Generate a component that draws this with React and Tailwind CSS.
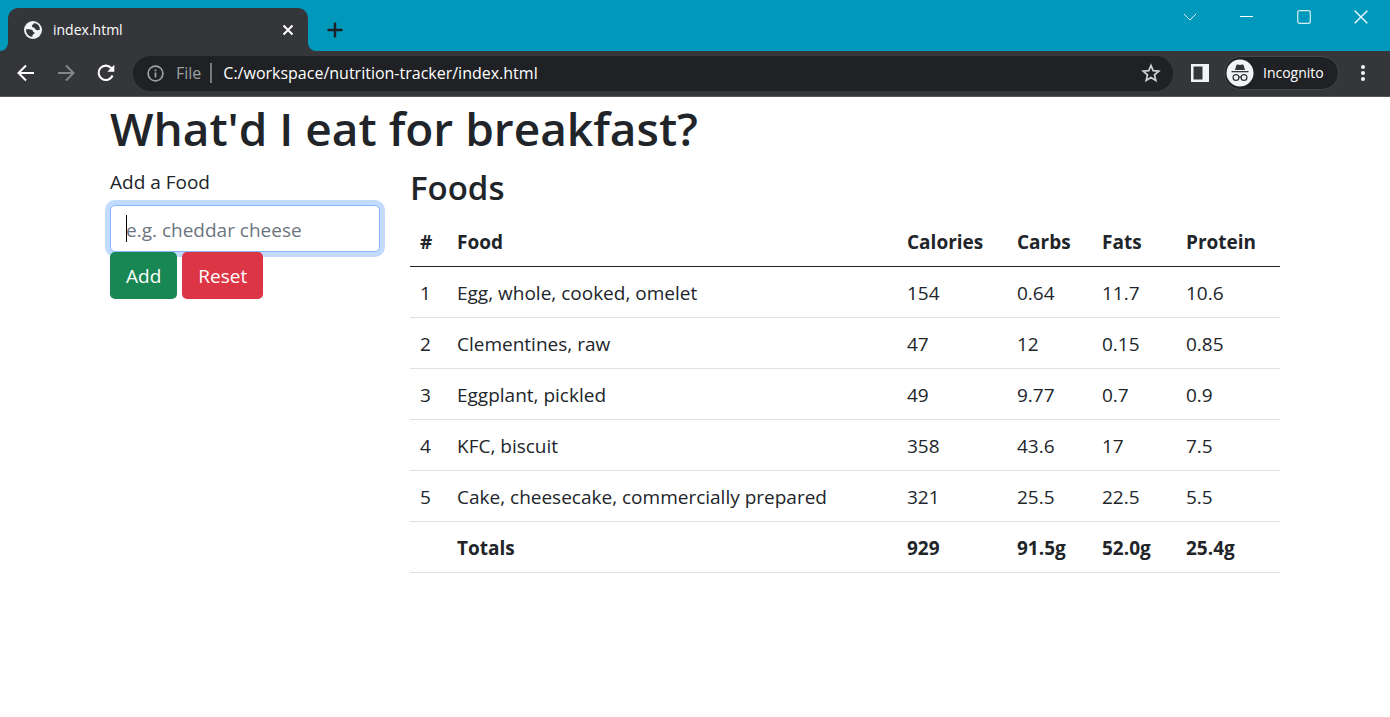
import React from "react";

const foods = [
  { name: "Egg, whole, cooked, omelet", calories: "154", carbs: "0.64", fats: "11.7", protein: "10.6" },
  { name: "Clementines, raw", calories: "47", carbs: "12", fats: "0.15", protein: "0.85" },
  { name: "Eggplant, pickled", calories: "49", carbs: "9.77", fats: "0.7", protein: "0.9" },
  { name: "KFC, biscuit", calories: "358", carbs: "43.6", fats: "17", protein: "7.5" },
  { name: "Cake, cheesecake, commercially prepared", calories: "321", carbs: "25.5", fats: "22.5", protein: "5.5" },
];

function GlobeIcon() {
  return (
    <svg width="20" height="20" viewBox="0 0 20 20" aria-hidden="true">
      <circle cx="10" cy="10" r="9" fill="#f1f3f4" />
      <path d="M3 9.300c2.200-.2 4.900-.3 6.400 1 .9.800.3 1.700 1.500 2 .9.200.9 1.200.1 1.500-1.100.4-1.600 1.200-1.700 3.100A7 7 0 0 1 3 9.300z" fill="#35363a" />
      <path d="M11.300 3.100A7 7 0 0 1 17 9.500c-1.400.9-3.100.8-4.400.1-1-.6-.5-1.700-1.600-2.100-1-.3-2.100-.3-2.100-1.600 0-1.400 1.800-1.200 2.400-2.800z" fill="#35363a" />
    </svg>
  );
}

function IncognitoIcon() {
  return (
    <svg width="28" height="28" viewBox="0 0 28 28" aria-hidden="true">
      <circle cx="14" cy="14" r="13.500" fill="#f1f3f4" />
      <path d="M10.300 6.300c.2-.7.800-1 1.500-.8l2.200.6 2.200-.6c.7-.2 1.300.1 1.500.8l1.300 4.700H9z" fill="#35363a" />
      <path d="M5.500 12h17v1.300h-17z" fill="#35363a" />
      <g fill="none" stroke="#35363a" strokeWidth="1.300">
        <circle cx="10" cy="18.500" r="2.900" />
        <circle cx="18" cy="18.500" r="2.900" />
        <path d="M12.900 18.200c.7-.5 1.500-.5 2.200 0" />
      </g>
    </svg>
  );
}

function TabStrip() {
  return (
    <div className="flex h-[51px] items-end bg-[#0099bc]">
      <svg width="8" height="8" viewBox="0 0 8 8" aria-hidden="true">
        <path d="M0 8h8V0a8 8 0 0 1-8 8z" fill="#35363a" />
      </svg>
      <div className="flex h-[43px] w-[300px] items-center rounded-t-[10px] bg-[#35363a] pl-[15px] pr-3 text-white">
        <GlobeIcon />
        <span className="ml-[10px] flex-1 text-sm">index.html</span>
        <button type="button" aria-label="Close tab" className="flex size-4 items-center justify-center">
          <svg width="12" height="12" viewBox="0 0 12 12" stroke="#fff" strokeWidth="2" aria-hidden="true">
            <path d="M1.500 1.500l9 9M10.500 1.500l-9 9" />
          </svg>
        </button>
      </div>
      <svg width="8" height="8" viewBox="0 0 8 8" aria-hidden="true">
        <path d="M8 8H0V0a8 8 0 0 0 8 8z" fill="#35363a" />
      </svg>
      <button type="button" aria-label="New tab" className="flex h-[43px] w-[38px] items-center justify-center">
        <svg width="16" height="16" viewBox="0 0 16 16" stroke="#202124" strokeWidth="2.400" aria-hidden="true">
          <path d="M8 .5v15M.5 8h15" />
        </svg>
      </button>
      <div className="ml-auto flex h-full items-start text-white">
        <button type="button" aria-label="Search tabs" className="flex h-[33px] w-14 items-center justify-center">
          <svg width="14" height="8" viewBox="0 0 14 8" fill="none" stroke="#d5eff5" strokeWidth="1" aria-hidden="true">
            <path d="M.8 .8L7 7l6.200-6.200" />
          </svg>
        </button>
        <button type="button" aria-label="Minimize" className="flex h-[33px] w-[57px] items-center justify-center">
          <svg width="13" height="1" viewBox="0 0 13 1" aria-hidden="true">
            <path d="M0 0h13v1H0z" fill="#fff" />
          </svg>
        </button>
        <button type="button" aria-label="Maximize" className="flex h-[33px] w-[57px] items-center justify-center">
          <svg width="14" height="14" viewBox="0 0 14 14" fill="none" stroke="#d5eff5" strokeWidth="1.200" aria-hidden="true">
            <rect x=".7" y=".7" width="12.600" height="12.600" rx="2" />
          </svg>
        </button>
        <button type="button" aria-label="Close window" className="flex h-[33px] w-[58px] items-center justify-center">
          <svg width="14" height="14" viewBox="0 0 14 14" stroke="#fff" strokeWidth="1.300" aria-hidden="true">
            <path d="M.7 .7l12.600 12.600M13.300 .7L.7 13.300" />
          </svg>
        </button>
      </div>
    </div>
  );
}

function Toolbar() {
  return (
    <div className="flex h-[46px] items-center border-b border-[#55565a] bg-[#35363a] pb-px text-white">
      <div className="flex w-[133px] shrink-0 items-center gap-5 pl-4">
        <button type="button" aria-label="Back">
          <svg width="20" height="20" viewBox="0 0 20 20" fill="none" stroke="#fff" strokeWidth="2" aria-hidden="true">
            <path d="M18 10H3M10 2.500L2.500 10l7.500 7.500" />
          </svg>
        </button>
        <button type="button" aria-label="Forward">
          <svg width="20" height="20" viewBox="0 0 20 20" fill="none" stroke="#85868a" strokeWidth="2" aria-hidden="true">
            <path d="M2 10h15M10 2.500l7.500 7.500-7.500 7.500" />
          </svg>
        </button>
        <button type="button" aria-label="Reload">
          <svg width="20" height="20" viewBox="0 0 20 20" aria-hidden="true">
            <path d="M16.500 12.500A7.200 7.200 0 1 1 15.600 5.500" fill="none" stroke="#fff" strokeWidth="2.100" />
            <path d="M18.300 1.800v7h-7z" fill="#fff" />
          </svg>
        </button>
      </div>
      <div className="flex h-[35px] min-w-0 flex-1 items-center rounded-full bg-[#202124] pl-[14px] pr-3">
        <svg width="17" height="17" viewBox="0 0 17 17" aria-hidden="true">
          <circle cx="8.500" cy="8.500" r="7.400" fill="none" stroke="#9aa0a6" strokeWidth="1.700" />
          <path d="M7.600 7.500h1.800v5H7.600zM7.600 4.500h1.800v1.800H7.600z" fill="#9aa0a6" />
        </svg>
        <span className="ml-3 text-base text-[#9aa0a6]">File</span>
        <span className="ml-[9px] h-5 w-[2px] bg-[#77797d]" />
        <input
          aria-label="Address"
          readOnly
          value="C:/workspace/nutrition-tracker/index.html"
          className="ml-[11px] min-w-0 flex-1 bg-transparent text-base text-white outline-none"
        />
        <button type="button" aria-label="Bookmark">
          <svg width="20" height="20" viewBox="0 0 20 20" fill="none" stroke="#d0d2d5" strokeWidth="1.700" aria-hidden="true">
            <path d="M10 2.500l2.200 5.200 5.600.5-4.300 3.700 1.300 5.500-4.800-2.900-4.800 2.900 1.300-5.500-4.300-3.700 5.600-.5z" />
          </svg>
        </button>
      </div>
      <button type="button" aria-label="Side panel" className="ml-[18px]">
        <svg width="18" height="18" viewBox="0 0 18 18" aria-hidden="true">
          <path d="M0 0h18v18H0zM2.500 2.500v13h9v-13z" fill="#f1f3f4" fillRule="evenodd" />
        </svg>
      </button>
      <button
        type="button"
        className="ml-[15px] flex h-[34px] w-[115px] shrink-0 items-center gap-[9px] rounded-full border border-[#45464a] bg-[#202124] pl-px text-sm"
      >
        <IncognitoIcon />
        Incognito
      </button>
      <button type="button" aria-label="Menu" className="ml-[22px] mr-[25px]">
        <svg width="4" height="18" viewBox="0 0 4 18" fill="#f1f3f4" aria-hidden="true">
          <circle cx="2" cy="3" r="2" />
          <circle cx="2" cy="9" r="2" />
          <circle cx="2" cy="15" r="2" />
        </svg>
      </button>
    </div>
  );
}

function FoodForm() {
  return (
    <form className="col-span-3" onSubmit={(event) => event.preventDefault()}>
      <label htmlFor="food-name" className="mb-2 block leading-[30px]">
        Add a Food
      </label>
      <div className="relative">
        <input
          id="food-name"
          type="text"
          placeholder="e.g. cheddar cheese"
          className="block h-[47px] w-full rounded-[5px] border border-[#86b7fe] bg-white px-[15px] pt-[2px] caret-transparent ring-[5px] ring-[#c2dbfe] outline-none placeholder:text-[#6c757d]"
        />
        <span className="absolute left-4 top-[10px] h-[27px] w-px bg-black" />
      </div>
      <div className="relative flex gap-[5px] text-white">
        <button type="submit" className="h-[47px] rounded-[5px] bg-[#198754] px-4 pt-[2px]">
          Add
        </button>
        <button type="reset" className="h-[47px] rounded-[5px] bg-[#dc3545] px-4 pt-[2px]">
          Reset
        </button>
      </div>
    </form>
  );
}

function FoodTable() {
  return (
    <section className="col-span-9">
      <h2 className="mb-[7px] text-[33px] font-semibold leading-[42px]">Foods</h2>
      <table className="w-full table-fixed border-collapse text-left leading-[30px] [&_td]:px-[10px] [&_td]:pt-[11px] [&_td]:pb-[9px] [&_th]:px-[10px] [&_th]:pt-[11px] [&_th]:pb-[9px]">
        <colgroup>
          <col className="w-[37px]" />
          <col />
          <col className="w-[110px]" />
          <col className="w-[85px]" />
          <col className="w-[84px]" />
          <col className="w-[104px]" />
        </colgroup>
        <thead>
          <tr className="border-b border-[#212529]">
            <th scope="col">#</th>
            <th scope="col">Food</th>
            <th scope="col">Calories</th>
            <th scope="col">Carbs</th>
            <th scope="col">Fats</th>
            <th scope="col">Protein</th>
          </tr>
        </thead>
        <tbody>
          {foods.map((food, index) => (
            <tr key={food.name} className="border-b border-[#dee2e6]">
              <td>{index + 1}</td>
              <td>{food.name}</td>
              <td>{food.calories}</td>
              <td>{food.carbs}</td>
              <td>{food.fats}</td>
              <td>{food.protein}</td>
            </tr>
          ))}
        </tbody>
        <tfoot>
          <tr className="border-b border-[#dee2e6] font-bold">
            <td />
            <th scope="row">Totals</th>
            <td>929</td>
            <td>91.5g</td>
            <td>52.0g</td>
            <td>25.4g</td>
          </tr>
        </tfoot>
      </table>
    </section>
  );
}

export default function App() {
  return (
    <div className="min-h-screen bg-white font-['Open_Sans','Noto_Sans',sans-serif]">
      <header>
        <TabStrip />
        <Toolbar />
      </header>
      <main className="mx-auto max-w-[1200px] px-[15px] text-[19px] text-[#212529]">
        <h1 className="mb-2 text-[46px] font-semibold leading-[62px]">What'd I eat for breakfast?</h1>
        <div className="grid grid-cols-12 gap-x-[30px]">
          <FoodForm />
          <FoodTable />
        </div>
      </main>
    </div>
  );
}
